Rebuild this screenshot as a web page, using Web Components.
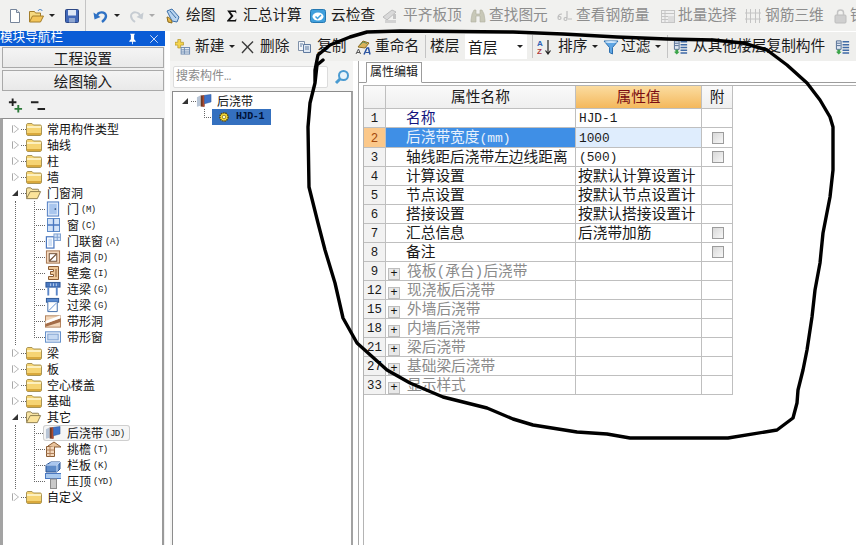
<!DOCTYPE html>
<html lang="zh">
<head>
<meta charset="utf-8">
<title>模块导航栏</title>
<style>
    html, body { margin: 0; padding: 0; background: #fff; overflow: hidden; }
    body { width: 856px; height: 545px; font-family: "Liberation Mono", "Noto Sans CJK SC", monospace; color: #1a1a1a; }
</style>
</head>
<body>
<gcl-window>
    <tool-bar slot="top" class="top">
        <tool-btn icon="doc" w="21"></tool-btn>
        <tool-btn icon="open" w="36" caret></tool-btn>
        <tool-btn icon="save" w="21"></tool-btn>
        <tool-sep w="8" h="100%"></tool-sep>
        <tool-btn icon="undo" w="35" caret></tool-btn>
        <tool-btn icon="redo" w="37" caret off></tool-btn>
        <tool-btn icon="draw" w="60" t="21">绘图</tool-btn>
        <tool-btn icon="sigma" w="85" t="18">汇总计算</tool-btn>
        <tool-btn icon="cloud" w="72" t="21">云检查</tool-btn>
        <tool-btn icon="align" w="88" t="21" off>平齐板顶</tool-btn>
        <tool-btn icon="binoc" w="87" t="19" off>查找图元</tool-btn>
        <tool-btn icon="rebar" w="103" t="19" off>查看钢筋量</tool-btn>
        <tool-btn icon="batch" w="85" t="18" off>批量选择</tool-btn>
        <tool-btn icon="grid3d" w="88" t="20" off>钢筋三维</tool-btn>
        <tool-btn icon="lock" w="23" t="17" off>钢</tool-btn>
    </tool-bar>

    <nav-panel slot="nav" heading="模块导航栏">
        <tree-item label="常用构件类型" icon="folder" closed></tree-item>
        <tree-item label="轴线" icon="folder" closed></tree-item>
        <tree-item label="柱" icon="folder" closed></tree-item>
        <tree-item label="墙" icon="folder" closed></tree-item>
        <tree-item label="门窗洞" icon="folderOpen">
            <tree-item child label="门" code="(M)" icon="door"></tree-item>
            <tree-item child label="窗" code="(C)" icon="window"></tree-item>
            <tree-item child label="门联窗" code="(A)" icon="doorWindow"></tree-item>
            <tree-item child label="墙洞" code="(D)" icon="wallHole"></tree-item>
            <tree-item child label="壁龛" code="(I)" icon="niche"></tree-item>
            <tree-item child label="连梁" code="(G)" icon="lianLiang"></tree-item>
            <tree-item child label="过梁" code="(G)" icon="guoLiang"></tree-item>
            <tree-item child label="带形洞" icon="stripHole"></tree-item>
            <tree-item child last label="带形窗" icon="stripWindow"></tree-item>
        </tree-item>
        <tree-item label="梁" icon="folder" closed></tree-item>
        <tree-item label="板" icon="folder" closed></tree-item>
        <tree-item label="空心楼盖" icon="folder" closed></tree-item>
        <tree-item label="基础" icon="folder" closed></tree-item>
        <tree-item label="其它" icon="folderOpen">
            <tree-item child hot label="后浇带" code="(JD)" icon="houJiao"></tree-item>
            <tree-item child label="挑檐" code="(T)" icon="eave"></tree-item>
            <tree-item child label="栏板" code="(K)" icon="panel"></tree-item>
            <tree-item child last label="压顶" code="(YD)" icon="coping"></tree-item>
        </tree-item>
        <tree-item label="自定义" icon="folder" closed></tree-item>
    </nav-panel>

    <tool-bar slot="sub" class="sub">
        <tool-btn icon="newItem" w="65" t="20" caret>新建</tool-btn>
        <tool-btn icon="cross" w="57" t="20">删除</tool-btn>
        <tool-btn icon="copy" w="58" t="20">复制</tool-btn>
        <tool-btn icon="rename" w="70" t="20">重命名</tool-btn>
        <tool-sep w="5"></tool-sep>
        <tool-btn w="35">楼层</tool-btn>
        <floor-select value="首层"></floor-select>
        <tool-sep w="5" style="margin-left:5px"></tool-sep>
        <tool-btn icon="sort" w="66" t="21" caret>排序</tool-btn>
        <tool-btn icon="filter" w="64" t="18" caret>过滤</tool-btn>
        <tool-sep w="6"></tool-sep>
        <tool-btn icon="floorCopy" w="162" t="20">从其他楼层复制构件</tool-btn>
        <tool-btn icon="floorCopy" w="21"></tool-btn>
    </tool-bar>

    <list-panel slot="list" placeholder="搜索构件…">
        <tree-item label="后浇带" icon="houJiao" noline>
            <tree-item child last selected label="HJD-1" icon="gear"></tree-item>
        </tree-item>
    </list-panel>

    <prop-panel slot="props" tab="属性编辑"></prop-panel>
</gcl-window>

<script>
const ICONS = {
    doc: '<path d="M3.5 1.5h6l3 3v10h-9z" fill="#fff" stroke="#76859a"/><path d="M9.5 1.5v3h3" fill="#dde5ef" stroke="#76859a"/>',
    open: '<path d="M1.5 14V3.5h5l1 1.5h5V8" fill="#f6d980" stroke="#a47e2a"/><path d="M1.5 14l3-6h11l-3 6z" fill="#f3c55a" stroke="#a47e2a"/><path d="M10 3c1-2 3-2 4.5 0" fill="none" stroke="#3b79c4"/>',
    save: '<rect x="1.5" y="1.5" width="13" height="13" rx="1" fill="#4168b8" stroke="#2b4684"/><rect x="4" y="2" width="8" height="5.5" fill="#dfe8f6"/><rect x="5" y="10" width="6" height="4.5" fill="#8fa6d0"/>',
    undo: '<path d="M4 9c0-6 9-6 9-1 0 3-2 4.5-4 6" fill="none" stroke="#2f72c4" stroke-width="2.4"/><path d="M.5 4.5l1 7 6-2.5z" fill="#2f72c4"/>',
    redo: '<path d="M12 9c0-6-9-6-9-1 0 3 2 4.5 4 6" fill="none" stroke="#c6ccd2" stroke-width="2"/><path d="M15.5 4.5l-1 7-6-2.5z" fill="#c6ccd2"/>',
    draw: '<path d="M2 3l5-2 7 8-2 5-5-1z" fill="#b8d4ef" stroke="#3b6fa8"/><path d="M2 9c2 0 5 3 5 6l-4-1z" fill="#e8b94a" stroke="#8a6a1c"/><path d="M5 3l6 7" stroke="#3b6fa8" fill="none"/>',
    sigma: '<path d="M2 2.5h9l.5 3-1.5-1.5H5.500l3 4-3.500 4h5l1.500-1.500-.5 3H2v-.8l4-4.700-4-5.700z" fill="#111"/>',
    cloud: '<rect x=".5" y="1.5" width="15" height="13" rx="2" fill="#3f9fdc" stroke="#2477b0"/><ellipse cx="8" cy="8.5" rx="5.5" ry="4" fill="#fff"/><path d="M5.500 8.500l2 2 3.500-3.500" fill="none" stroke="#3f9fdc" stroke-width="1.5"/>',
    align: '<path d="M1 9l9-7 4 2-9 8z" fill="#d9d9d9" stroke="#bcbcbc"/><path d="M3 12h11v3H3z" fill="#d2d2d2"/><path d="M11 6h3v5h-3z" fill="#c4c4c4"/>',
    binoc: '<path d="M2 6l2-4h2v4h4V2h2l2 4 1 6v2h-5V8H6v6H1v-2z" fill="#c8c8b8" stroke="#b0b0a0" stroke-width=".6"/>',
    rebar: '<path d="M1 10c0-3 2-4 4-4M1 10c0 2 3 2 3 0s-3-2-3 0zM10 3v8M10 11c0 2-3 2-3 0s3-2 3 0zM11 11h4" fill="none" stroke="#bdbdbd" stroke-width="1.2"/>',
    batch: '<rect x="1.5" y="2.5" width="13" height="12" fill="#efefef" stroke="#c5c5c5"/><path d="M1.5 5.5h13M1.5 8.5h13M1.5 11.5h13M5 2.5v12" stroke="#c5c5c5"/><path d="M8 8h6v6H8z" fill="#dcdcdc"/>',
    grid3d: '<path d="M1.5 1v14M5.500 1v14M10.500 1v14M14.500 1v14M0 5h16M0 11h16" stroke="#c4c4c4" fill="none"/>',
    lock: '<rect x="2" y="7" width="11" height="8" rx="1" fill="#cfcfcf" stroke="#bdbdbd"/><path d="M4.500 7V4.500c0-3.500 6-3.500 6 0V7" fill="none" stroke="#c4c4c4" stroke-width="1.5"/>',
    newItem: '<path d="M3 0h3v3h3v3H6v3H3V6H0V3h3z" fill="#f4d44e" stroke="#b08f1e" stroke-width=".7"/><rect x="6.5" y="8.5" width="9" height="7" fill="#e8eef6" stroke="#6e8bb0"/><path d="M6.500 11h9M6.500 13.300h9M10 8.500v7" stroke="#6e8bb0"/>',
    cross: '<path d="M2.500 2l5 5 5-5 1 1-5 5 5 5.500-1 1-5-5.500-5 5.500-1-1 5-5.500-5-5z" fill="#3c3c3c"/>',
    copy: '<path d="M1.500 2.500h6v9h-6z" fill="#f2f5f9" stroke="#7f90a8"/><path d="M6.500 5.500h7v8h-7z" fill="#dde7f3" stroke="#5f7a9f"/><path d="M8 8h4M8 10h4M3 5h3M3 7h2" stroke="#5f7a9f"/>',
    rename: '<path d="M3 8l5-6 6 2-4 5z" fill="#d9b25a" stroke="#8d6d23"/><path d="M5 6l3-3 4 1.500" stroke="#5f8d5a" fill="none"/><path d="M1 15l2.500-5 2 5M2 13.500h3" fill="none" stroke="#555"/><path d="M9 15.500l3-6.500h1.500l1.500 6.500" fill="none" stroke="#2a53a0" stroke-width="1.5"/><path d="M10.500 13.500h3.500" stroke="#2a53a0"/>',
    sort: '<text x="0" y="7" font-size="8" font-family="Liberation Sans" font-weight="700" fill="#2d62b5">A</text><text x="0" y="15" font-size="8" font-family="Liberation Sans" font-weight="700" fill="#b03c3c">Z</text><path d="M11 1v13M8.500 11.500l2.500 3.500 2.500-3.500" fill="none" stroke="#222" stroke-width="1.2"/>',
    filter: '<path d="M1 2h14L9.500 8.500V15l-3-1.500v-5z" fill="#5fa6e4" stroke="#2d6fae"/><ellipse cx="8" cy="3" rx="6" ry="1" fill="#cfe6fa"/>',
    floorCopy: '<path d="M1.500 1.500h5v9h-5z" fill="#dfe7f2" stroke="#506b92"/><path d="M2 4h4M2 6.500h4" stroke="#506b92"/><path d="M8 2.500h7M8 5.500h7M8 8.500h7M8 11.500h7M8 14.500h7" stroke="#3f6aa6" stroke-width="1.6"/><path d="M2.500 11h3v2H7l-3 3-3-3h1.500z" fill="#3ca54a"/>',
    search: '<circle cx="9.5" cy="6.5" r="4.5" fill="#e8f4fb" stroke="#4a9bd1" stroke-width="2"/><path d="M6 10l-4 4" stroke="#4a9bd1" stroke-width="3"/>',
    plusTree: '<path d="M5 0h2v3h3v2H7v3H5V5H2V3h3z" fill="#222"/><path d="M11 7h2v3h3v2h-3v3h-2v-3H8v-2h3z" fill="#2d7a3a"/>',
    minusTree: '<path d="M1 3h8v2.200H1zM8 10h8v2.200H8z" fill="#222"/>',
    pin: '<path d="M5 2h6v1h-1v6l2 2v1H8.500v3h-1v-3H4v-1l2-2V3H5z" fill="#fff"/>',
    closeX: '<path d="M3 3l10 10M13 3L3 13" stroke="#dfe9fa" stroke-width="1.2"/>',
    folder: '<path d="M.5 4c0-1 .5-1.500 1.500-1.500h4L7.500 4h6.500c1 0 1.500.5 1.500 1.500V13c0 .8-.5 1.500-1.500 1.500H2c-1 0-1.500-.7-1.500-1.500z" fill="#f6d473" stroke="#a99455"/><path d="M1 5h14v2H1z" fill="#fdf0bf"/><path d="M1 12h14v2H1z" fill="#d9a93c"/>',
    folderOpen: '<path d="M.5 13V4c0-1 .5-1.500 1.500-1.500h3L6.500 4h6c1 0 1 .5 1 1.500V7" fill="#f8e4a4" stroke="#8a7a4c"/><path d="M.5 14l4-7.500h11l-3.500 7.500z" fill="#fbe39a" stroke="#8a7a4c"/>',
    door: '<rect x="2.5" y=".5" width="12" height="15" fill="#dce9fa" stroke="#4a78c0"/><rect x="4.5" y="2.5" width="8" height="11" fill="#a9c6ee"/><circle cx="11" cy="8" r=".9" fill="#20406e"/>',
    window: '<rect x="2.5" y="1.5" width="12" height="13" fill="#d3e3f8" stroke="#5e8bc8"/><path d="M8.500 1.500v13M2.500 8h12" stroke="#4a78c0" stroke-width="1.3"/>',
    doorWindow: '<rect x="1.5" y="3.5" width="8" height="12" fill="#fff" stroke="#4a78c0" stroke-width="1.3"/><rect x="3.5" y="5.5" width="4" height="8" fill="#cfe0f6"/><rect x="9.5" y=".5" width="7" height="7" fill="#d3e3f8" stroke="#7d9fcf"/><path d="M13 .5v7M9.500 4h7" stroke="#7d9fcf"/>',
    wallHole: '<rect x="1.5" y="1.5" width="14" height="13" fill="#f3d7bb" stroke="#a2714a"/><rect x="4.5" y="4.5" width="8" height="8" fill="#fff" stroke="#6b4a30"/><path d="M5 12l7-7" stroke="#6b4a30" stroke-width="1.2"/>',
    niche: '<path d="M3.500 1.500h10v13h-10v-3h5v-2h-3v-3h3v-2h-5z" fill="#f0c99a" stroke="#8a5c34"/><path d="M11 4v8" stroke="#8a5c34"/>',
    lianLiang: '<rect x="1" y="1" width="15" height="5" fill="#4a78c0" stroke="#2b5595"/><path d="M3.500 6v9M12.500 6v9" stroke="#5a86c8" stroke-width="2"/><path d="M6 2v3M9 2v3M12 2v3" stroke="#bcd3ef"/>',
    guoLiang: '<rect x="1.5" y="1" width="13" height="4" fill="#5b8bd0" stroke="#2b5595"/><path d="M3 5v10h10V5" fill="#fff" stroke="#3f6aa6"/><path d="M4 14l8-8" stroke="#5b8bd0"/>',
    stripHole: '<rect x=".5" y="2.5" width="16" height="12" fill="#f3d7bb" stroke="#b0805a"/><path d="M.5 11l16-6v4L.5 14z" fill="#a36c48"/><path d="M.5 8l16-6v3L.5 11z" fill="#fff"/>',
    stripWindow: '<rect x=".5" y="2.5" width="16" height="11" fill="#e7effa" stroke="#5e8bc8"/><rect x="3" y="5" width="11" height="6" fill="#c6d9f2" stroke="#7d9fcf"/>',
    houJiao: '<path d="M1 4l4-2v11l-4 1z" fill="#b8c5d6"/><path d="M5 2h4v12H5z" fill="#6a3a26"/><path d="M7 2h2v12H7z" fill="#b04a30"/><path d="M9 2l7-1v8l-7 2z" fill="#3f72c8" stroke="#2b5595" stroke-width=".5"/>',
    eave: '<path d="M1.500 5.500h8v10h-8z" fill="#f3d7bb" stroke="#8a5c34"/><path d="M1.500 9h8M1.500 12.500h8M5 5.500v10" stroke="#b0805a"/><path d="M3 5l6-4 7 5H9" fill="#e8c39c" stroke="#8a5c34"/>',
    panel: '<path d="M1 8l5-3h9v7l-3 3H1z" fill="#5e8bc8" stroke="#2b5595"/><path d="M1 8h11v7M12 8l3-3" fill="none" stroke="#cfe0f6"/><path d="M3 8l3-3h9l-3 3z" fill="#a9c6ee"/>',
    coping: '<rect x=".5" y=".5" width="16" height="5" fill="#a9c9ee" stroke="#4a78c0"/><rect x="5.5" y="6" width="6" height="9.5" fill="#c9c9c9" stroke="#8c8c8c"/>',
    gear: '<circle cx="8" cy="8" r="5.5" fill="#ffe23a" stroke="#5a4a10" stroke-dasharray="2 1" stroke-width="2"/><circle cx="8" cy="8" r="2.4" fill="#fffbd0" stroke="#7a6510"/>'
};

class UiIcon extends HTMLElement {
    connectedCallback() {
        const name = this.getAttribute('name');
        const size = this.getAttribute('size') || 16;
        this.attachShadow({ mode: 'open' });
        this.shadowRoot.innerHTML = `
            <style>
                :host { display: inline-block; width: ${size}px; height: ${size}px; flex: none; line-height: 0; }
                svg { display: block; }
            </style>
            <svg width="${size}" height="${size}" viewBox="0 0 ${name === 'door' || name.length > 6 ? 17 : 16} 16">${ICONS[name] || ''}</svg>
        `;
    }
}

class ToolBar extends HTMLElement {
    constructor() {
        super();
        this.attachShadow({ mode: 'open' });
        this.shadowRoot.innerHTML = `
            <style>
                :host { display: flex; align-items: center; background: #f1f1ef; overflow: hidden; white-space: nowrap; }
                :host(.top) { height: 31px; padding-left: 7px; }
                :host(.sub) { height: 29px; padding-left: 5px; background: #efefed; }
            </style>
            <slot></slot>
        `;
    }
}

class ToolBtn extends HTMLElement {
    connectedCallback() {
        const icon = this.getAttribute('icon');
        const t = this.getAttribute('t');
        const off = this.hasAttribute('off');
        this.attachShadow({ mode: 'open' });
        this.shadowRoot.innerHTML = `
            <style>
                :host { display: flex; align-items: center; flex: none; width: ${this.getAttribute('w')}px; height: 100%; font-size: 14.7px; color: ${off ? '#8d8d8d' : '#1c1c1c'}; line-height: 20px; }
                .i { flex: none; width: ${t ? t + 'px' : 'auto'}; display: flex; }
                .c { width: 0; height: 0; margin-left: 5px; border: 3px solid transparent; border-top: 3px solid ${off ? '#aaa' : '#222'}; border-bottom: 0; flex: none; }
            </style>
            ${icon ? `<span class="i"><ui-icon name="${icon}"></ui-icon></span>` : ''}
            <slot></slot>
            ${this.hasAttribute('caret') ? '<span class="c"></span>' : ''}
        `;
    }
}

class ToolSep extends HTMLElement {
    connectedCallback() {
        this.attachShadow({ mode: 'open' });
        this.shadowRoot.innerHTML = `
            <style>
                :host { display: block; flex: none; box-sizing: border-box; width: ${this.getAttribute('w')}px; height: ${this.getAttribute('h') || '80%'}; border-left: 1px solid #c4c4c4; }
            </style>
        `;
    }
}

class FloorSelect extends HTMLElement {
    connectedCallback() {
        this.attachShadow({ mode: 'open' });
        this.shadowRoot.innerHTML = `
            <style>
                :host { display: flex; align-items: center; justify-content: space-between; box-sizing: border-box; width: 62px; height: 25px; padding: 0 4px 0 3px; background: #fff; font-size: 14.7px; flex: none; }
                .c { border: 3px solid transparent; border-top: 3px solid #222; border-bottom: 0; }
            </style>
            <span>${this.getAttribute('value')}</span><span class="c"></span>
        `;
    }
}

class TreeItem extends HTMLElement {
    connectedCallback() {
        const isChild = this.hasAttribute('child');
        const selected = this.hasAttribute('selected');
        const hot = this.hasAttribute('hot');
        const closed = this.hasAttribute('closed');
        const code = this.getAttribute('code');
        const icon = this.getAttribute('icon');
        const label = this.getAttribute('label');
        const dot = '#666';
        this.attachShadow({ mode: 'open' });
        const guideSize = this.hasAttribute('last') ? '1px 50%' : '1px 100%';
        const head = isChild ? `
            <span class="guide"></span>
            <span class="cell"><ui-icon name="${icon}" size="${selected ? 12 : 16}"></ui-icon><span class="t">${label}</span>${code ? `<span class="code">${code}</span>` : ''}</span>
        ` : `
            <span class="ex"></span><span class="stub"></span><ui-icon name="${icon}"></ui-icon><span class="t">${label}</span>
        `;
        this.shadowRoot.innerHTML = `
            <style>
                :host { display: block; font-size: 12px; color: #111; }
                .row { display: flex; align-items: center; height: 16px; line-height: 16px; white-space: nowrap; padding-left: ${isChild ? 0 : 10}px; }
                .ex { flex: none; width: 0; height: 0; margin-right: 3px; }
                .ex { ${closed
                    ? 'border-left: 5px solid #fff; border-top: 4px solid transparent; border-bottom: 4px solid transparent; filter: drop-shadow(1px 0 0 #a8a8a8) drop-shadow(-1px 0 0 #a8a8a8);'
                    : 'border-bottom: 6px solid #333; border-left: 6px solid transparent; margin-left: -1px; margin-right: 3px;'} }
                .stub { flex: none; width: 5px; height: 1px; background: repeating-linear-gradient(to right, ${dot} 0 1px, transparent 1px 2px); }
                .guide { flex: none; align-self: stretch; width: var(--guide, 11px);
                    background:
                        repeating-linear-gradient(to bottom, ${dot} 0 1px, transparent 1px 2px) left top / ${guideSize} no-repeat,
                        repeating-linear-gradient(to right, ${dot} 0 1px, transparent 1px 2px) left center / 100% 1px no-repeat; }
                .cell { display: flex; align-items: center; height: 16px; ${hot ? 'box-sizing: border-box; margin-left: -2px; padding: 0 5px 0 2px; background: #f6f6f6; box-shadow: inset 0 0 0 1px #cfcfcf; border-radius: 3px;' : ''} ${selected ? 'padding: 0 7px 0 6px; background: #3470bf;' : ''} }
                .t { margin-left: ${isChild ? 6 : 5}px; margin-top: 3px; }
                ${selected ? '.t { margin-top: 0; font-size: 10px; letter-spacing: -.4px; font-weight: 700; color: #001238; }' : ''}
                .code { margin-left: 2px; margin-top: 1px; font-size: 9px; letter-spacing: -.5px; color: #222; }
                .kids { margin-left: 12px; padding-left: 18px; border-left: 1px dotted ${this.hasAttribute('noline') ? 'transparent' : dot}; }
            </style>
            <div class="row">${head}</div>
            <div class="kids"><slot></slot></div>
        `;
        if (!this.children.length) this.shadowRoot.querySelector('.kids').remove();
    }
}

class NavPanel extends HTMLElement {
    connectedCallback() {
        this.attachShadow({ mode: 'open' });
        this.shadowRoot.innerHTML = `
            <style>
                :host { display: flex; flex-direction: column; width: 165px; height: 100%; box-sizing: border-box; background: #f0f0f0; }
                .head { display: flex; align-items: center; height: 15px; flex: none; background: #0a5cd6; color: #fff; font-size: 12.6px; line-height: 15px; white-space: nowrap; }
                .head span:first-child { flex: 1; }
                .tab { display: flex; align-items: center; justify-content: center; box-sizing: border-box; height: 21px; margin: 1px 1px 0 2px; flex: none; background: linear-gradient(#f4f4f4, #e9e9e9); border: 1px solid #a9a9a9; font-size: 14.6px; }
                .tab + .tab { margin-top: 2px; }
                .actions { display: flex; gap: 7px; align-items: center; box-sizing: border-box; height: 27px; flex: none; padding: 3px 0 0 7px; }
                .tree { flex: 1; margin: 0 1px 0 0; padding-top: 2px; background: #fff; border: 1px solid #8f8f8f; border-left: 3px solid #a3a3a3; border-right: 2px solid #9a9a9a; border-bottom: 0; }
            </style>
            <div class="head"><span>${this.getAttribute('heading')}</span><ui-icon name="pin" size="13"></ui-icon><ui-icon name="closeX" size="12" style="margin:0 5px 0 9px"></ui-icon></div>
            <div class="tab">工程设置</div>
            <div class="tab">绘图输入</div>
            <div class="actions"><ui-icon name="plusTree"></ui-icon><ui-icon name="minusTree"></ui-icon></div>
            <div class="tree"><slot></slot></div>
        `;
    }
}

class ListPanel extends HTMLElement {
    connectedCallback() {
        this.attachShadow({ mode: 'open' });
        this.shadowRoot.innerHTML = `
            <style>
                :host { display: flex; flex-direction: column; width: 183px; flex: none; box-sizing: border-box; background: #f4f4f3; --guide: 8px; }
                .search { display: flex; align-items: center; box-sizing: border-box; height: 30px; flex: none; padding: 2px 0 0 3px; }
                .box { box-sizing: border-box; width: 155px; height: 22px; line-height: 20px; padding-left: 2px; background: #fff; border: 1px solid #dcdcdc; border-radius: 2px; font-size: 12px; color: #8a8a8a; }
                .go { margin-left: 6px; display: flex; }
                .tree { flex: 1; margin-left: 2px; padding-top: 1px; background: #fff; border: 1px solid #8c8c8c; border-width: 1px 2px 0 1px; border-right-color: #a2a2a2; }
            </style>
            <div class="search"><div class="box">${this.getAttribute('placeholder')}</div><span class="go"><ui-icon name="search"></ui-icon></span></div>
            <div class="tree"><slot></slot></div>
        `;
    }
}

class PropPanel extends HTMLElement {
    static rows = [
        { no: '1', name: '名称', value: 'HJD-1', mono: true, tone: 'link' },
        { no: '2', name: '后浇带宽度<i>(mm)</i>', value: '1000', mono: true, check: true, active: true },
        { no: '3', name: '轴线距后浇带左边线距离', value: '(500)', mono: true, check: true },
        { no: '4', name: '计算设置', value: '按默认计算设置计' },
        { no: '5', name: '节点设置', value: '按默认节点设置计' },
        { no: '6', name: '搭接设置', value: '按默认搭接设置计' },
        { no: '7', name: '汇总信息', value: '后浇带加筋', check: true },
        { no: '8', name: '备注', value: '', check: true },
        { no: '9', name: '筏板(承台)后浇带', group: true },
        { no: '12', name: '现浇板后浇带', group: true },
        { no: '15', name: '外墙后浇带', group: true },
        { no: '18', name: '内墙后浇带', group: true },
        { no: '21', name: '梁后浇带', group: true },
        { no: '27', name: '基础梁后浇带', group: true },
        { no: '33', name: '显示样式', group: true }
    ];

    connectedCallback() {
        this.attachShadow({ mode: 'open' });
        const body = PropPanel.rows.map(row => `
            <tr class="${row.active ? 'active' : ''} ${row.group ? 'group' : ''} ${row.tone || ''}">
                <td class="no">${row.no}</td>
                <td class="name">${row.group ? '<span class="plus">+</span>' : ''}${row.name}</td>
                <td class="val ${row.mono ? 'mono' : ''}">${row.value || ''}</td>
                <td class="att">${row.check ? '<span class="check"></span>' : ''}</td>
            </tr>
        `).join('');
        this.shadowRoot.innerHTML = `
            <style>
                :host { display: flex; flex-direction: column; flex: 1; min-width: 0; box-sizing: border-box; margin-left: 5px; border-left: 1px solid #a8a8a8; background: #fff; }
                .tabs { display: flex; align-items: flex-end; box-sizing: border-box; height: 22px; flex: none; padding-left: 7px; border-bottom: 1px solid #9c9c9c; }
                .tab { box-sizing: border-box; width: 56px; height: 21px; margin-bottom: -1px; line-height: 21px; text-align: center; font-size: 12px; border: 1px solid #9c9c9c; border-bottom: 1px solid #fff; background: #fff; }
                .body { flex: 1; margin: 2px 0 0 4px; border: 1px solid #b4b4b4; border-width: 1px 0 0 1px; }
                table { border-collapse: separate; border-spacing: 0; table-layout: fixed; width: 369px; font-size: 14.7px; }
                col.a { width: 22px; } col.b { width: 190px; } col.c { width: 126px; } col.d { width: 31px; }
                th, td { box-sizing: border-box; padding: 2px 0 0; height: 19px; line-height: 16px; border-right: 1px solid #bfbfbf; border-bottom: 1px solid #bfbfbf; white-space: nowrap; overflow: hidden; font-weight: 400; }
                th { height: 23px; background: linear-gradient(#fafafa, #efefef); text-align: center; line-height: 20px; }
                th.v { background: linear-gradient(#fbdca0, #f4b85c); color: #7b0c12; }
                .no { background: #f2f2f2; text-align: center; font-size: 12.4px; }
                .name { padding-left: 20px; color: #1a1a1a; }
                .val { padding-left: 2px; }
                .val.mono { font-size: 12.8px; padding-left: 3px; }
                .name i { font-style: normal; font-size: 13px; }
                .link .name { color: #14147e; }
                .active .no { background: #fbc88a; color: #a4480c; }
                .active .name { background: #3f8fe6; color: #e8f1fc; }
                .active .val { background: #dfedfd; }
                .group .name { padding-left: 2px; color: #8b8b8b; }
                .plus { display: inline-block; box-sizing: border-box; width: 12px; height: 12px; margin-right: 7px; vertical-align: -1px; background: #e8e8e8; border: 1px solid #bdbdbd; color: #111; font-size: 12px; line-height: 9px; text-align: center; font-family: "Liberation Sans", sans-serif; }
                .att { padding-top: 0; }
                .check { display: block; box-sizing: border-box; width: 12px; height: 12px; margin: 0 0 0 10px; border: 1px solid #9c9c9c; background: linear-gradient(135deg, #d8d8d8, #f7f7f7); }
            </style>
            <div class="tabs"><div class="tab">${this.getAttribute('tab')}</div></div>
            <div class="body">
                <table>
                    <colgroup><col class="a"><col class="b"><col class="c"><col class="d"></colgroup>
                    <thead><tr><th></th><th>属性名称</th><th class="v">属性值</th><th>附</th></tr></thead>
                    <tbody>${body}</tbody>
                </table>
            </div>
        `;
    }
}

class GclWindow extends HTMLElement {
    constructor() {
        super();
        this.attachShadow({ mode: 'open' });
        const ink = 'M323 60 317 65 315 83 315 70 318 55 330 45 350 37 367 32 400 31 513 32 563 34 617 37 667 39 713 40 743 43 767 50 787 65 807 83 820 100 830 117 833 127 833 170 830 197 823 233 820 263 815 290 812 317 807 350 803 370 798 390 797 403 793 418 777 430 728 438 630 438 607 434 577 432 533 425 513 419 487 408 443 397 410 383 387 370 357 343 343 318 335 283 325 250 318 223 309 187 308 127 310 103 315 83';
        this.shadowRoot.innerHTML = `
            <style>
                :host { display: block; position: relative; width: 856px; height: 545px; overflow: hidden; background: #fff; }
                .top { height: 31px; overflow: hidden; }
                .main { display: flex; height: 514px; }
                .nav { width: 165px; flex: none; }
                .right { display: flex; flex-direction: column; flex: 1; min-width: 0; margin-left: 5px; }
                .sub { flex: none; margin-top: 1px; }
                .work { display: flex; flex: 1; min-height: 0; }
                svg { position: absolute; left: 0; top: 0; pointer-events: none; }
            </style>
            <div class="top"><slot name="top"></slot></div>
            <div class="main">
                <div class="nav"><slot name="nav"></slot></div>
                <div class="right">
                    <div class="sub"><slot name="sub"></slot></div>
                    <div class="work"><slot name="list"></slot><slot name="props"></slot></div>
                </div>
            </div>
            <svg width="856" height="545" viewBox="0 0 856 545"><path d="${ink}" fill="none" stroke="#000" stroke-width="3.4" stroke-linejoin="round" stroke-linecap="round"/></svg>
        `;
    }
}

customElements.define('ui-icon', UiIcon);
customElements.define('tool-bar', ToolBar);
customElements.define('tool-btn', ToolBtn);
customElements.define('tool-sep', ToolSep);
customElements.define('floor-select', FloorSelect);
customElements.define('tree-item', TreeItem);
customElements.define('nav-panel', NavPanel);
customElements.define('list-panel', ListPanel);
customElements.define('prop-panel', PropPanel);
customElements.define('gcl-window', GclWindow);
</script>
</body>
</html>
